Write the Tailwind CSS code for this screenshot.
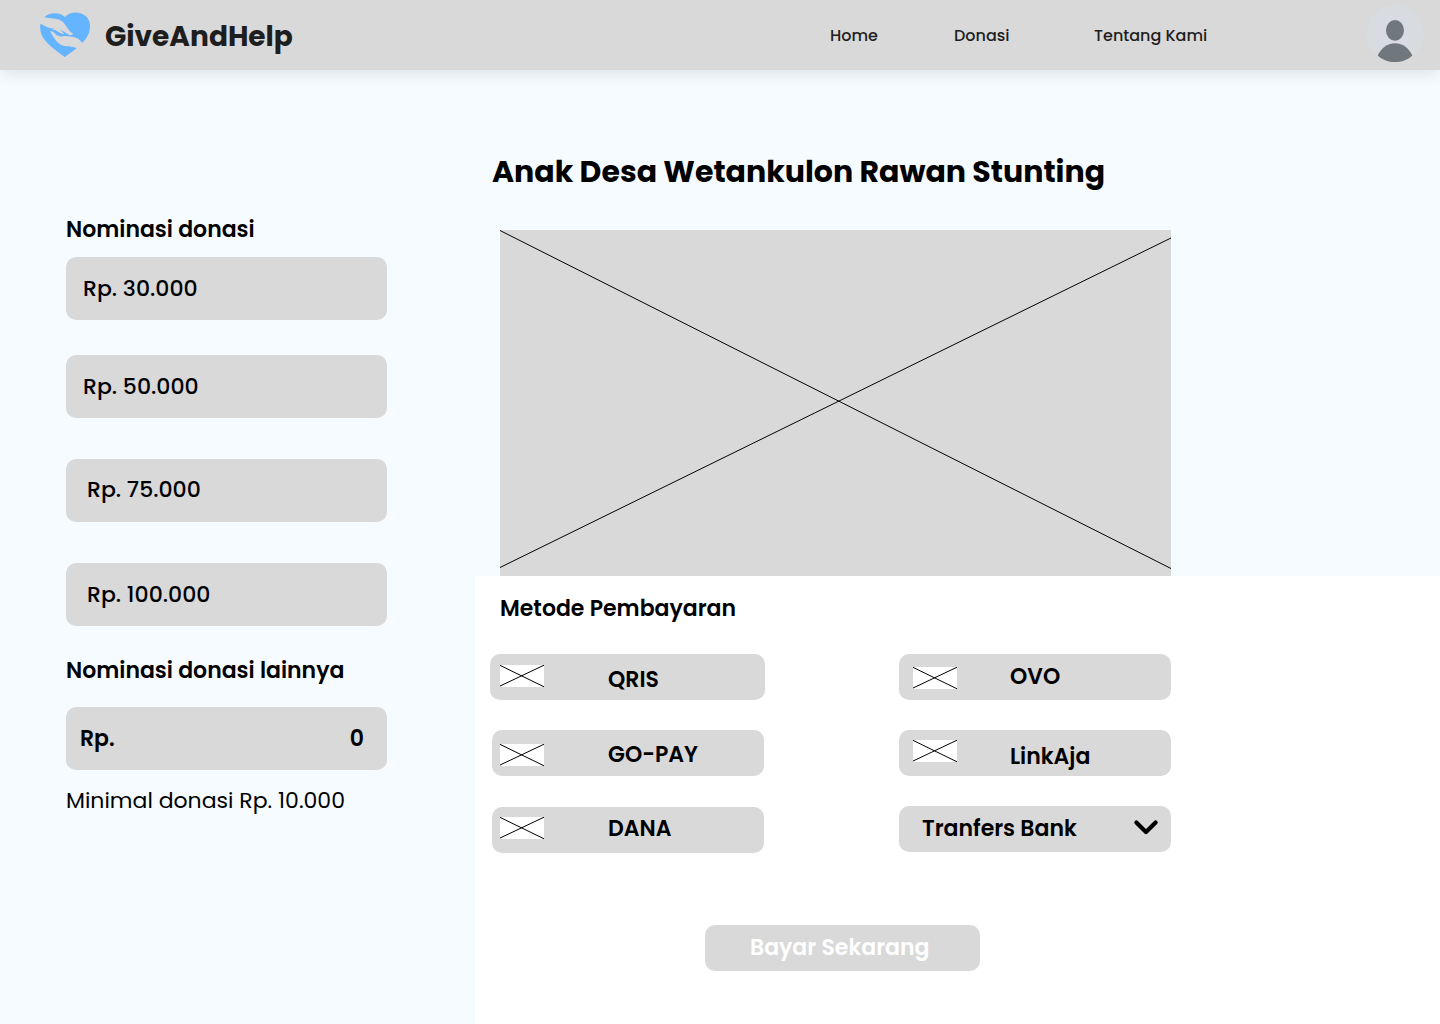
<!DOCTYPE html>
<html lang="id">
<head>
<meta charset="utf-8">
<title>GiveAndHelp</title>
<script src="https://cdn.jsdelivr.net/npm/@tailwindcss/browser@4"></script>
</head>
<body class="flex h-[1024px] w-[1440px] flex-col overflow-hidden bg-[#f6fbff] font-['Poppins','Inter',sans-serif] text-[22px] leading-8 font-semibold whitespace-nowrap text-black">
<svg class="hidden">
  <symbol id="thumb" viewBox="0 0 44 22">
    <path fill="#fff" d="M0 0h44v22H0z"/>
    <path stroke="#000" stroke-width="1" d="M-.3.2L44 21.8M-.3 21.2L44 .2"/>
  </symbol>
</svg>

<header class="z-10 flex h-[70px] shrink-0 items-start bg-[#d9d9d9] text-[#1e1e1e] shadow-[0_4px_14px_rgba(0,0,0,0.1)]">
  <svg class="ml-[30px] size-[70px] shrink-0" viewBox="0 0 210 210">
    <path fill="#64b4ff" d="M105 51C93 38 62 34 44 50C30 62 26 84 36 107C48 132 78 150 104 171C124 156 143 144 157 129C175 109 183 90 179 68C172 36 126 27 105 51Z"/>
    <path fill="#d9d9d9" d="M26 64L44 51C58 58 80 52 95 63C109 74 115 94 129 101C129 106 119 106 111 101L90 88L103 103C92 101 84 95 75 89L64 91L74 86C58 86 44 79 26 67Z"/>
    <path fill="#d9d9d9" d="M60 94C66 93 71 97 77 103C84 110 94 110 105 108C118 109 136 111 146 117L160 131L142 145C126 138 106 143 90 133C76 124 70 110 60 94Z"/>
  </svg>
  <div class="mt-[17px] ml-[5px] w-[725px] text-[28px] leading-10 font-bold">GiveAndHelp</div>
  <nav class="mt-6 flex text-[16px] leading-6 font-medium">
    <a class="w-[124px]">Home</a>
    <a class="w-[140px]">Donasi</a>
    <a>Tentang Kami</a>
  </nav>
  <svg class="mt-[5px] mr-[16px] ml-auto size-[58px]" viewBox="0 0 58 58">
    <circle cx="29" cy="28.5" r="28.5" fill="#d8dce1"/>
    <ellipse cx="29" cy="25.4" rx="9" ry="10.3" fill="#70777d"/>
    <path fill="#70777d" d="M11.7 50.5C15 43.5 21 38.2 29 38.2S43 43.5 46.3 50.5C41.5 55.2 35.5 57 29 57S16.5 55.2 11.7 50.5Z"/>
  </svg>
</header>

<main class="flex flex-1">
  <aside class="flex w-[475px] flex-col pt-36 pl-[66px] *:w-[321px]">
    <h2>Nominasi donasi</h2>
    <button class="mt-[11px] flex h-[63px] items-center rounded-[10px] bg-[#d9d9d9] pl-[17px] font-medium">Rp. 30.000</button>
    <button class="mt-[35px] flex h-[63px] items-center rounded-[10px] bg-[#d9d9d9] pl-[17px] font-medium">Rp. 50.000</button>
    <button class="mt-[41px] flex h-[63px] items-center rounded-[10px] bg-[#d9d9d9] pb-0.5 pl-[21px] font-medium">Rp. 75.000</button>
    <button class="mt-[41px] flex h-[63px] items-center rounded-[10px] bg-[#d9d9d9] pl-[21px] font-medium">Rp. 100.000</button>
    <h2 class="mt-[29px]">Nominasi donasi lainnya</h2>
    <div class="mt-5 flex h-[63px] items-center justify-between rounded-[10px] bg-[#d9d9d9] pr-[23px] pl-[14px]">
      <span>Rp.</span><span>0</span>
    </div>
    <p class="mt-[15px] font-normal">Minimal donasi Rp. 10.000</p>
  </aside>

  <div class="flex flex-1 flex-col">
    <h1 class="mt-[82px] ml-[17px] text-[30px] leading-10 font-bold">Anak Desa Wetankulon Rawan Stunting</h1>
    <svg class="mt-[38px] ml-[25px] h-[346px] w-[671px] shrink-0 bg-[#d9d9d9]" viewBox="0 0 671 346">
      <path stroke="#000" d="M0 .5L671 338.5M0 337.5L671 8"/>
    </svg>

    <section class="flex flex-1 flex-col bg-white pt-[17px]">
      <h2 class="ml-[25px]">Metode Pembayaran</h2>
      <div class="mt-[29px] ml-[15px] flex">
        <div class="flex w-[409px] flex-col">
          <button class="flex h-[46px] w-[275px] items-start rounded-[10px] bg-[#d9d9d9] pl-[10px]">
            <svg class="mt-[11px] h-[22px] w-[44px]"><use href="#thumb"/></svg>
            <span class="mt-[10px] ml-16">QRIS</span>
          </button>
          <button class="mt-[30px] ml-0.5 flex h-[46px] w-[272px] items-start rounded-[10px] bg-[#d9d9d9] pl-2">
            <svg class="mt-[14px] h-[22px] w-[44px]"><use href="#thumb"/></svg>
            <span class="mt-[9px] ml-16">GO-PAY</span>
          </button>
          <button class="mt-[31px] ml-0.5 flex h-[46px] w-[272px] items-start rounded-[10px] bg-[#d9d9d9] pl-2">
            <svg class="mt-[10px] h-[22px] w-[44px]"><use href="#thumb"/></svg>
            <span class="mt-1.5 ml-16">DANA</span>
          </button>
        </div>
        <div class="flex flex-col gap-[30px]">
          <button class="flex h-[46px] w-[272px] items-start rounded-[10px] bg-[#d9d9d9] pl-[14px]">
            <svg class="mt-[13px] h-[22px] w-[44px]"><use href="#thumb"/></svg>
            <span class="mt-[7px] ml-[53px]">OVO</span>
          </button>
          <button class="flex h-[46px] w-[272px] items-start rounded-[10px] bg-[#d9d9d9] pl-[14px]">
            <svg class="mt-[10px] h-[22px] w-[44px]"><use href="#thumb"/></svg>
            <span class="mt-[11px] ml-[53px]">LinkAja</span>
          </button>
          <button class="flex h-[46px] w-[272px] items-start justify-between rounded-[10px] bg-[#d9d9d9] pr-[12px] pl-[23px]">
            <span class="mt-[7px]">Tranfers Bank</span>
            <svg class="mt-[13px] h-[16px] w-[26px]" viewBox="0 0 26 16" fill="none" stroke="#000" stroke-width="4.2" stroke-linecap="round" stroke-linejoin="round"><path d="M3.4 3.4L13 13L22.6 3.4"/></svg>
          </button>
        </div>
      </div>
      <button class="mt-[72px] ml-[230px] flex h-[46px] w-[275px] items-start rounded-[10px] bg-[#d9d9d9] pl-[45px] text-white"><span class="mt-[7px]">Bayar Sekarang</span></button>
    </section>
  </div>
</main>
</body>
</html>
